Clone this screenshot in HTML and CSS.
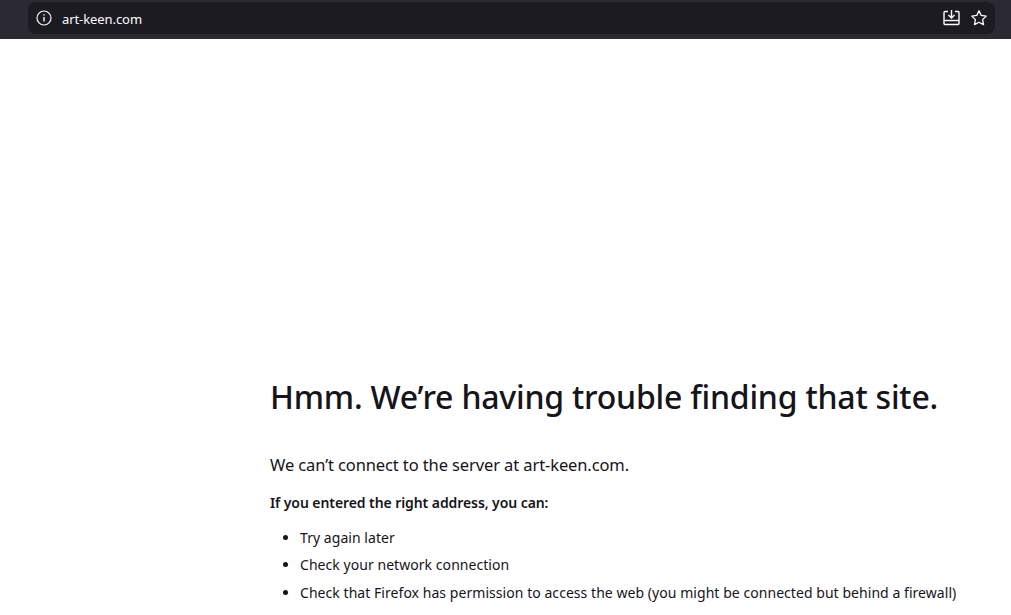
FILE: index.html
```html
<!DOCTYPE html>
<html lang="en">
<head>
<meta charset="utf-8">
<title>Server Not Found</title>
<link rel="stylesheet" href="styles.css">
</head>
<body>
<header class="toolbar">
  <div class="urlbar">
    <svg class="icon info" width="16" height="16" viewBox="0 0 16 16" fill="none" stroke="#fbfbfe" stroke-width="1.2"><circle cx="8" cy="8" r="7"/><path d="M8 7v4.5" stroke-width="1.4"/><path d="M8 4.2v1.4" stroke-width="1.4"/></svg>
    <span class="url">art-keen.com</span>
    <div class="actions">
      <svg class="icon" width="17" height="16" viewBox="0 0 17 16" fill="none" stroke="#fbfbfe" stroke-width="1.4"><path d="M5 1.500H2C1.400 1.500 1 1.900 1 2.500V13.500C1 14.100 1.400 14.500 2 14.500H15C15.600 14.500 16 14.100 16 13.500V2.500C16 1.900 15.600 1.500 15 1.500H12"/><path d="M1 10.500H16"/><path d="M8.500 0V7.800M5.500 5L8.500 8L11.500 5"/></svg>
      <svg class="icon" width="16" height="16" viewBox="0 0 16 16" fill="none" stroke="#fbfbfe" stroke-width="1.3" stroke-linejoin="round"><path d="M8 .8l2.200 4.600 5 .7-3.600 3.500.9 5L8 12.200l-4.500 2.400.9-5L.8 6.100l5-.7z"/></svg>
    </div>
  </div>
</header>
<main class="error">
  <h1 class="title">Hmm. We’re having trouble finding that site.</h1>
  <p class="lead">We can’t connect to the server at art-keen.com.</p>
  <p class="strong">If you entered the right address, you can:</p>
  <ul class="tips">
    <li>Try again later</li>
    <li>Check your network connection</li>
    <li>Check that Firefox has permission to access the web (you might be connected but behind a firewall)</li>
  </ul>
</main>
</body>
</html>
```
FILE: styles.css
```css
html, body {
  margin: 0;
  height: 100%;
  overflow: hidden;
  background: #fff;
  color: #15141a;
  font-family: "Noto Sans", "Open Sans", sans-serif;
}
.toolbar {
  height: 39px;
  box-sizing: border-box;
  padding: 2px 16px 5px 28px;
  background: #2b2a33;
}
.urlbar {
  height: 32px;
  display: flex;
  align-items: center;
  padding: 0 8px;
  border-radius: 8px;
  background: #1c1b22;
  color: #fbfbfe;
}
.icon { flex: none; display: block; }
.url {
  margin: 1px 0 0 10px;
  font-size: 13px;
  letter-spacing: -.08px;
}
.actions {
  margin-left: auto;
  display: flex;
  align-items: center;
  gap: 11px;
}
.error {
  padding: 0 0 0 270px;
  margin-top: 338px;
}
.title {
  margin: 0;
  font-size: 32px;
  line-height: 40px;
  font-weight: 500;
  letter-spacing: -.21px;
  white-space: nowrap;
}
.lead {
  margin: 37px 0 0;
  font-size: 16.500px;
  line-height: 22px;
  letter-spacing: -.11px;
}
.strong {
  margin: 17px 0 0;
  font-size: 14px;
  line-height: 20px;
  font-weight: 600;
  letter-spacing: -.08px;
}
.tips {
  margin: 15px 0 0;
  padding: 0 0 0 30px;
  font-size: 14px;
  line-height: 20px;
  letter-spacing: .05px;
  white-space: nowrap;
}
.tips li { margin-bottom: 7.300px; }
```
